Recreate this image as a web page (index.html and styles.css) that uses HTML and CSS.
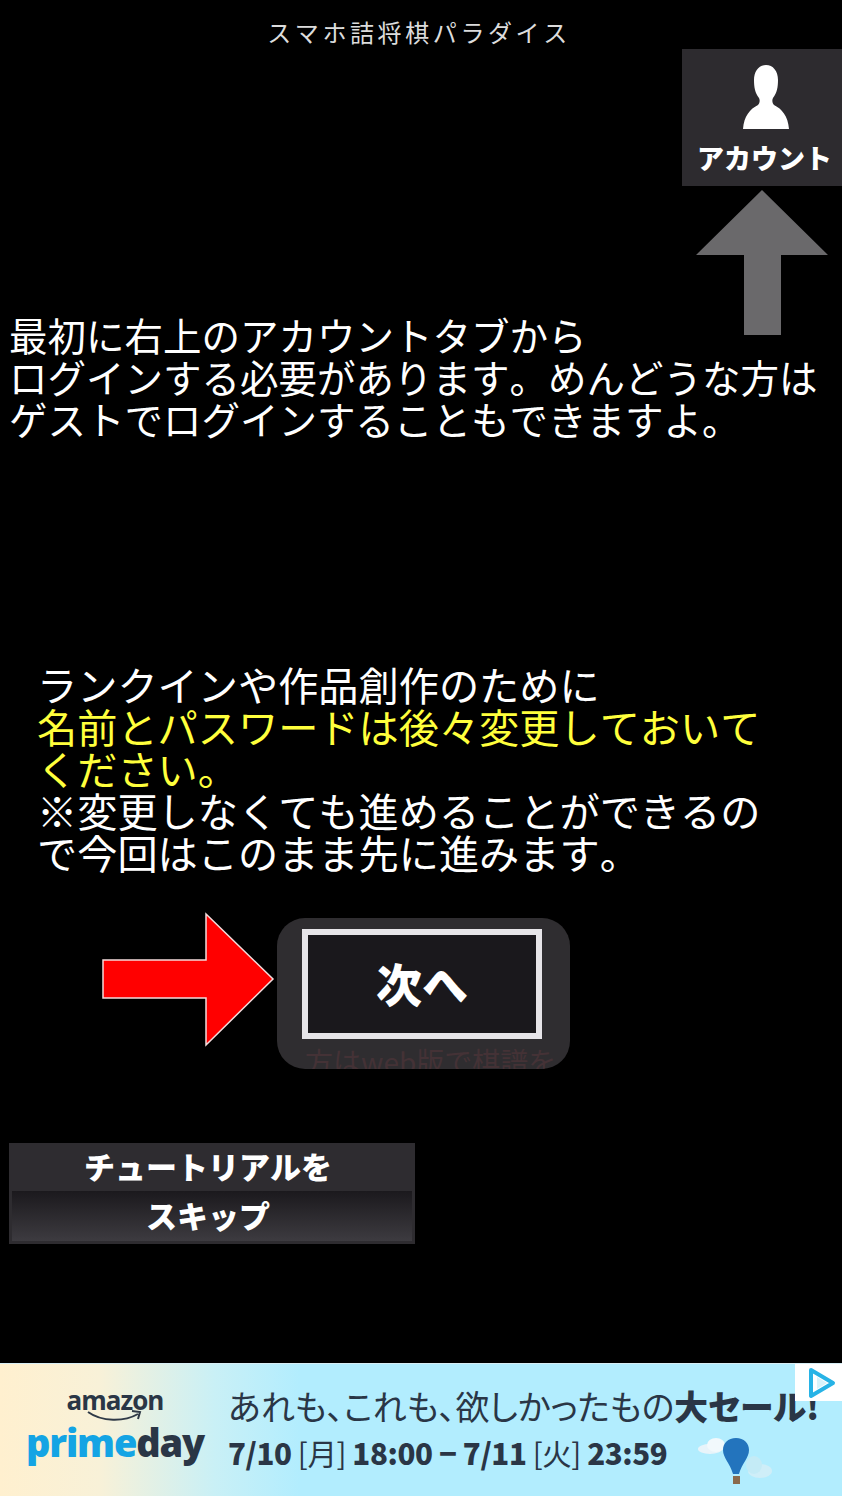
FILE: index.html
```html
<!DOCTYPE html>
<html lang="ja">
<head>
    <meta charset="UTF-8">
    <meta name="viewport" content="width=device-width, initial-scale=1.0">
    <title>スマホ詰将棋パラダイス</title>
    <link rel="stylesheet" href="styles.css">
</head>
<body>
    <div class="screen">
        <h1 class="app-title">スマホ詰将棋パラダイス</h1>

        <div class="account-tab">
            <svg class="account-icon" viewBox="0 0 46 64" width="46" height="64">
                <path d="M23 0c7 0 12 6 12 15 0 7-1 13-5 18-1 2-1 5 1 7 8 4 14 11 15 24H0c1-13 7-20 15-24 2-2 2-5 1-7-4-5-5-11-5-18C11 6 16 0 23 0z" fill="#fff"/>
            </svg>
            <span class="account-label">アカウント</span>
        </div>

        <svg class="up-arrow" viewBox="0 0 132 145" width="132" height="145">
            <path d="M66 0L132 65H85V145H48V65H0z" fill="#6a696b"/>
        </svg>

        <p class="intro">最初に右上のアカウントタブから<br>ログインする必要があります。めんどうな方は<br>ゲストでログインすることもできますよ。</p>

        <p class="notice">ランクインや作品創作のために<br><span class="yellow">名前とパスワードは後々変更しておいて<br>ください。</span><br>※変更しなくても進めることができるの<br>で今回はこのまま先に進みます。</p>

        <div class="next-row">
            <svg class="red-arrow" viewBox="0 0 173 135" width="173" height="135">
                <path d="M1 48H104V2L171 67 104 133V86H1z" fill="#f00" stroke="#f4dcdc" stroke-width="1.5"/>
            </svg>
            <div class="next-btn">
                <div class="next-inner">次へ</div>
                <span class="ghost-text">方はweb版で棋譜を</span>
            </div>
        </div>

        <div class="skip-btn">
            <div class="skip-top">チュートリアルを</div>
            <div class="skip-bottom">スキップ</div>
        </div>

        <div class="ad">
            <div class="ad-logo">
                <span class="amazon">amazon</span>
                <svg class="smile" viewBox="0 0 56 12" width="56" height="12">
                    <path d="M1 2c14 10 36 10 50 2M45 1l8 1-2 7" fill="none" stroke="#2f3a47" stroke-width="2"/>
                </svg>
                <span class="primeday"><span class="prime">prime</span>day</span>
            </div>
            <div class="ad-copy">
                <div class="ad-head">あれも、これも、欲しかったもの<b>大セール!</b></div>
                <div class="ad-date"><b>7/10</b> [月] <b>18:00 − 7/11</b> [火] <b>23:59</b></div>
            </div>
            <svg class="balloon" viewBox="0 0 76 50" width="76" height="50">
                <ellipse cx="12" cy="12" rx="12" ry="5" fill="#e8f4fa"/>
                <ellipse cx="18" cy="8" rx="9" ry="7" fill="#f2f9fc"/>
                <ellipse cx="62" cy="34" rx="12" ry="7" fill="#cfeef8"/>
                <ellipse cx="56" cy="28" rx="8" ry="9" fill="#c4ebf6"/>
                <path d="M38 1c8 0 13 5 13 12 0 8-7 13-10 24h-6C32 26 25 21 25 13 25 6 30 1 38 1z" fill="#2374bd"/>
                <rect x="35" y="39" width="7" height="8" fill="#8a6a4c"/>
            </svg>
            <div class="ad-badge">
                <svg viewBox="0 0 30 32" width="30" height="32">
                    <path d="M4 3L26 16 4 29z" fill="none" stroke="#27b3e6" stroke-width="4" stroke-linejoin="round"/>
                    <path d="M10 10L20 16 10 22z" fill="#d8f3fb"/>
                </svg>
            </div>
        </div>
    </div>
</body>
</html>
```

FILE: styles.css
```css
* {
    box-sizing: border-box;
}

body {
    margin: 0;
    background-color: #000;
    font-family: "Noto Sans CJK JP", "Noto Sans", sans-serif;
    font-kerning: none;
    color: #fff;
}

.screen {
    width: 842px;
    height: 1496px;
    display: flex;
    flex-direction: column;
    overflow: hidden;
}

.app-title {
    margin: 0;
    height: 49px;
    padding-top: 15px;
    padding-right: 4px;
    text-align: center;
    font-size: 24px;
    line-height: 34px;
    font-weight: 400;
    letter-spacing: 3.6px;
    color: #dcdcdc;
}

.account-tab {
    align-self: flex-end;
    width: 160px;
    height: 137px;
    background-color: #2d2b2f;
    display: flex;
    flex-direction: column;
    align-items: center;
    padding-top: 16px;
}

.account-icon {
    margin-left: 7px;
}

.account-label {
    margin: 9px 0 0 5px;
    font-size: 27px;
    line-height: 40px;
    font-weight: 900;
    white-space: nowrap;
}

.up-arrow {
    align-self: flex-end;
    margin: 4px 14px 0 0;
}

.intro {
    margin: -22px 0 0 9px;
    font-size: 38.5px;
    line-height: 42px;
    white-space: nowrap;
}

.notice {
    margin: 224px 0 0 37px;
    font-size: 40.2px;
    line-height: 42px;
    white-space: nowrap;
}

.yellow {
    color: #ffff3c;
}

.next-row {
    display: flex;
    align-items: flex-start;
    margin: 39px 0 0 102px;
}

.red-arrow {
    flex: none;
    margin-right: 2px;
}

.next-btn {
    position: relative;
    width: 293px;
    height: 151px;
    margin-top: 6px;
    padding: 11px 28px 28px 25px;
    background-color: #2f2d30;
    border-radius: 28px;
    overflow: hidden;
}

.next-inner {
    height: 110px;
    border: 6px solid #e6e4e8;
    background-color: #1a181c;
    display: flex;
    align-items: center;
    justify-content: center;
    padding-bottom: 4px;
    font-size: 46px;
    font-weight: 900;
}

.ghost-text {
    position: absolute;
    left: 28px;
    top: 128px;
    font-size: 28px;
    line-height: 30px;
    color: #443236;
    white-space: nowrap;
}

.skip-btn {
    width: 406px;
    height: 101px;
    margin: 74px 0 0 9px;
    background-color: #2e2c30;
    padding: 0 3px 3px;
    text-align: center;
    font-size: 31px;
    font-weight: 900;
}

.skip-top {
    height: 48px;
    line-height: 46px;
    margin: 0 -3px;
    padding-right: 8px;
}

.skip-bottom {
    height: 50px;
    line-height: 48px;
    padding-right: 8px;
    background: linear-gradient(#1b191d, #3d3b40);
}

.ad {
    position: relative;
    margin-top: 119px;
    height: 133px;
    background: linear-gradient(90deg, #fff0cf 0, #f8f1d8 100px, #c9f0f6 215px, #b2edfe 300px);
    border-top: 1px solid #d7eef5;
    display: flex;
    align-items: flex-start;
    color: #2a3646;
}

.ad-logo {
    width: 228px;
    flex: none;
    display: flex;
    flex-direction: column;
    align-items: center;
    padding: 21px 0 0 2px;
}

.amazon {
    font-family: "Open Sans", sans-serif;
    font-size: 26px;
    line-height: 30px;
    font-weight: 700;
    letter-spacing: -1px;
}

.smile {
    margin-top: -5px;
}

.primeday {
    margin-top: -3px;
    font-family: "Open Sans", sans-serif;
    font-size: 38px;
    line-height: 46px;
    font-weight: 800;
    letter-spacing: -1.2px;
}

.prime {
    color: #14a4e4;
}

.ad-copy {
    padding-top: 17px;
    white-space: nowrap;
}

.ad-head {
    font-size: 33.8px;
    line-height: 49px;
    font-feature-settings: "palt";
}

.ad-head b {
    font-weight: 900;
}

.ad-date {
    font-size: 29.5px;
    line-height: 44px;
    font-weight: 400;
    letter-spacing: -0.4px;
}

.ad-date b {
    font-weight: 800;
}

.balloon {
    position: absolute;
    left: 698px;
    top: 73px;
}

.ad-badge {
    position: absolute;
    right: 0;
    top: 0;
    width: 47px;
    height: 37px;
    background-color: #fff;
    display: flex;
    align-items: center;
    justify-content: flex-end;
    padding-right: 5px;
}
```
